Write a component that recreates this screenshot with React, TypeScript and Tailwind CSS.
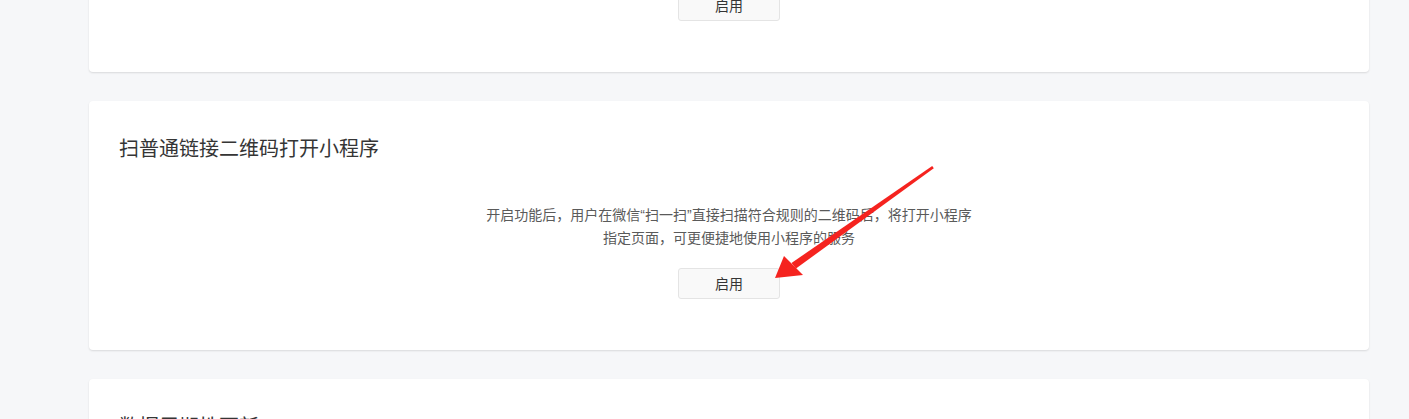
import React from "react";

type Section = {
  title: string;
  desc: React.ReactNode[];
  arrow?: boolean;
};

// Narrow Latin quotes, like the original rendering
const Q = ({ c }: { c: string }) => (
  <span className="[font-family:'Liberation_Sans',sans-serif] leading-none">{c}</span>
);

const scanDesc = [
  <>
    开启功能后，用户在微信<Q c="“" />扫一扫<Q c="”" />直接扫描符合规则的二维码后，将打开小程序
  </>,
  "指定页面，可更便捷地使用小程序的服务",
];

const sections: Section[] = [
  { title: "扫普通链接二维码打开小程序", desc: scanDesc },
  { title: "扫普通链接二维码打开小程序", desc: scanDesc, arrow: true },
  {
    title: "数据周期性更新",
    desc: [
      "开启后，微信客户端将定期拉取开发者服务器数据并缓存在本地",
      "用户打开小程序时可更快获取数据",
    ],
  },
];

const RedArrow = () => (
  <svg
    className="absolute inset-0 w-full h-full pointer-events-none"
    viewBox="0 0 1280 249"
    preserveAspectRatio="none"
  >
    <polygon points="843.2,65 844.8,67.2 707,167.5 702.5,162" fill="#f5231f" />
    <polygon points="686,177 695,155 714,174" fill="#f5231f" />
  </svg>
);

const Card = ({ section }: { section: Section }) => (
  <div className="relative h-[249px] bg-white rounded-[4px] shadow-[0_1px_2px_rgba(0,0,0,0.12)] px-[30px] pt-[33px]">
    <h2 className="h-[28px] text-[20px] leading-[28px] text-[#353535] font-normal">
      {section.title}
    </h2>
    <div className="mt-[41px] flex flex-col items-center text-[14px] leading-[23px] text-[#5a5a5a]">
      {section.desc.map((line, i) => (
        <p key={i} className="h-[23px]">
          {line}
        </p>
      ))}
    </div>
    <div className="mt-[19px] flex justify-center">
      <button className="w-[102px] h-[31px] bg-[#f9f9f9] border border-[#e4e4e4] rounded-[3px] text-[14px] text-[#353535]">
        启用
      </button>
    </div>
    {section.arrow && <RedArrow />}
  </div>
);

export default function App() {
  return (
    <div
      className="h-[419px] overflow-hidden bg-[#f6f7f9]"
      style={{ fontFamily: '"Noto Sans CJK SC", "Noto Sans", sans-serif' }}
    >
      <div className="-mt-[177px] pl-[89px] pr-[40px] flex flex-col gap-[29px]">
        {sections.map((s, i) => (
          <Card key={i} section={s} />
        ))}
      </div>
    </div>
  );
}
